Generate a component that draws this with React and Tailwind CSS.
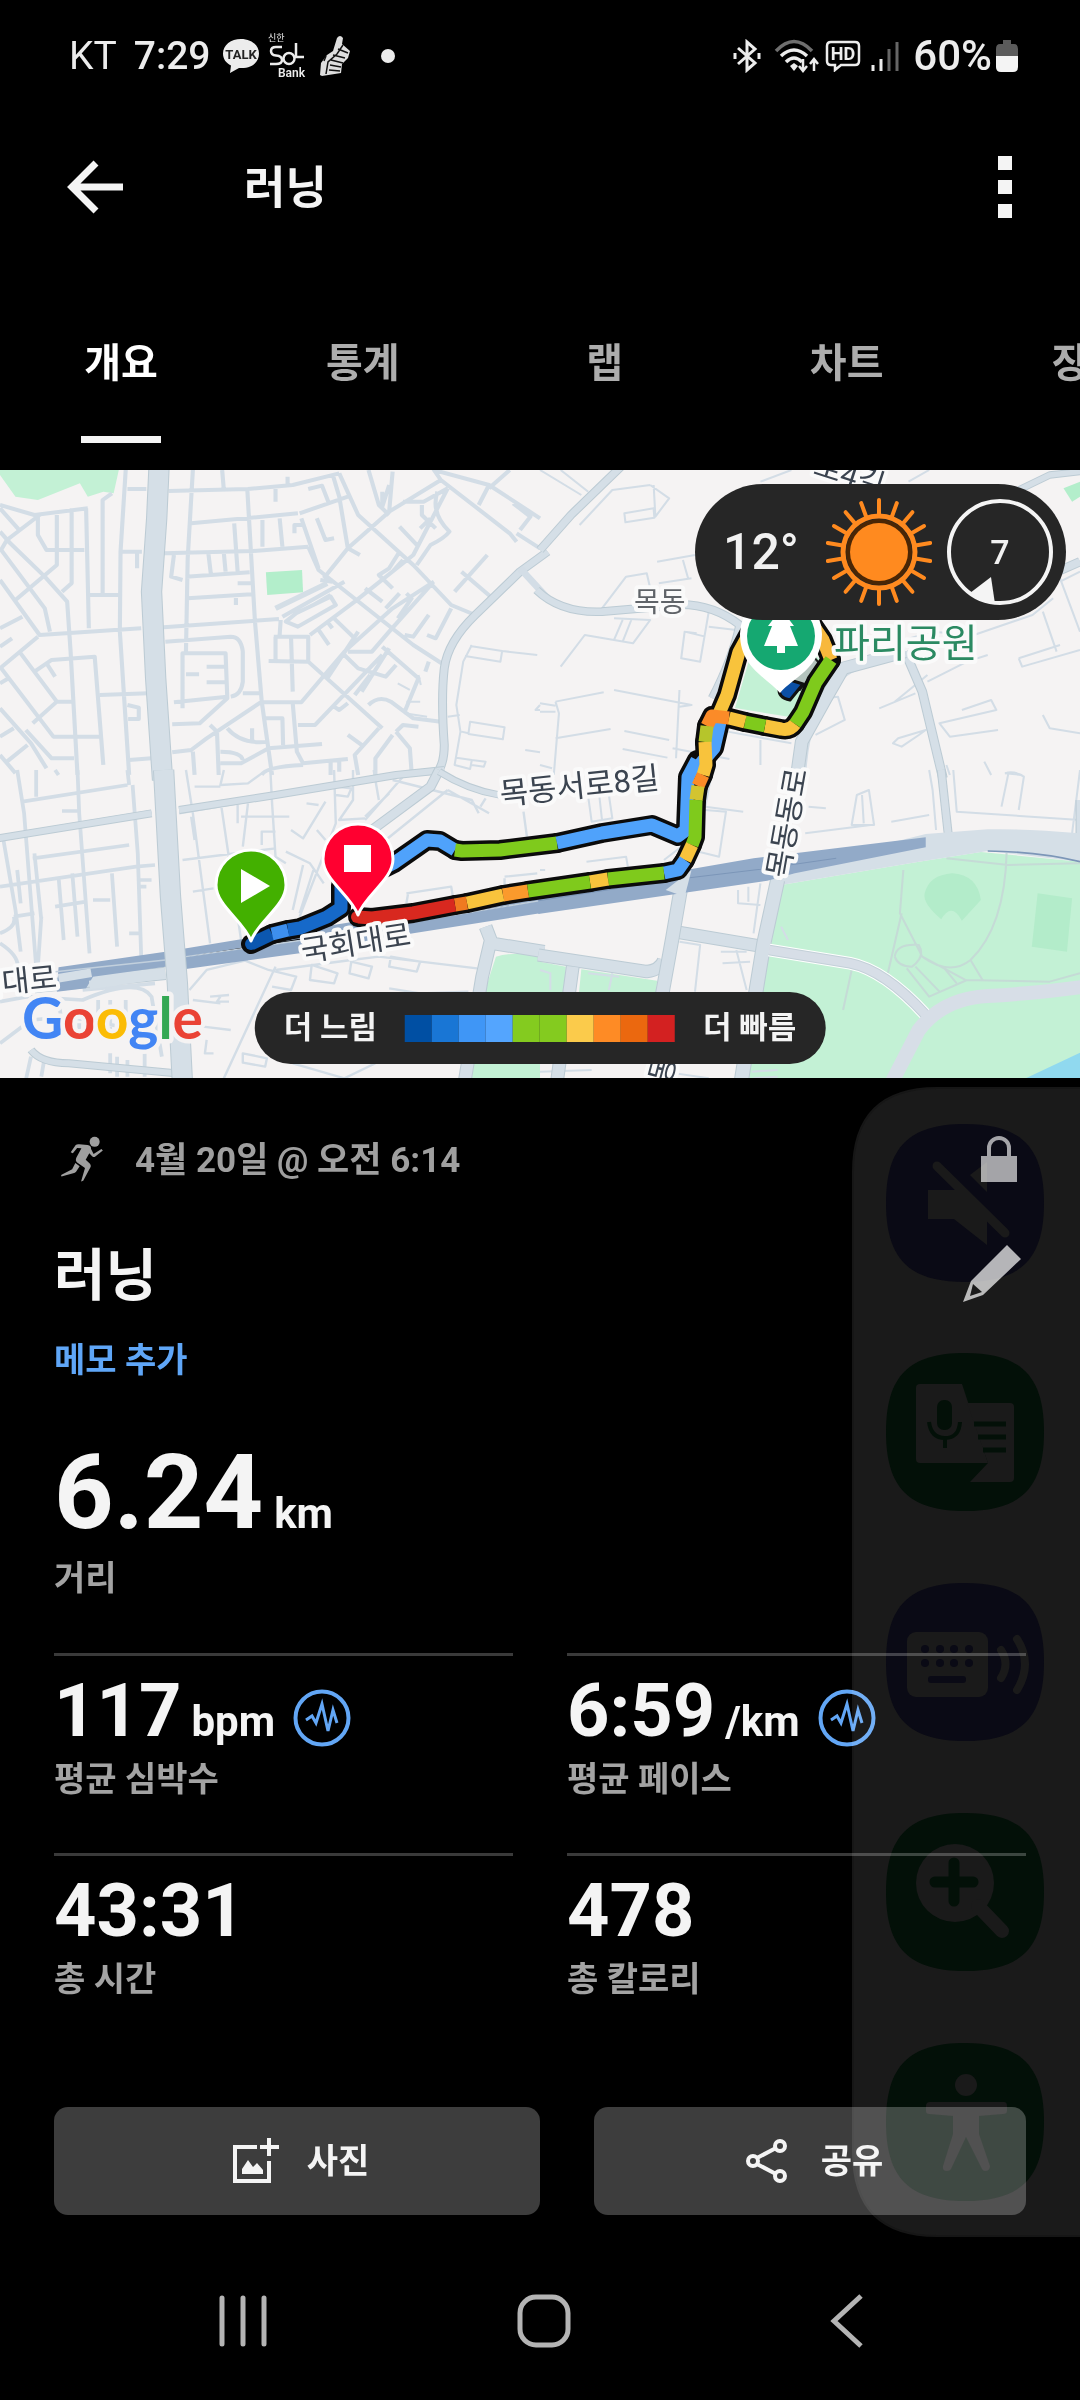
import React from "react";

const MINOR_NW =
  "M0 120L100 150 255 130M0 200L30 235M0 130L60 200M115 150L20 225 0 260M20 225L130 335 195 410 205 560 225 930M0 250L130 430 145 500M110 155V210L135 255H245M165 150V300L45 405M208 130V355L180 380M250 130L258 490M0 345L115 510 410 490M0 490L65 455M0 610L110 515M0 545L35 520M325 85L298 105V385M365 15L350 260 348 500 375 930M255 390H345M370 72H425M350 260H412M398 265V310M60 565L165 710H210M0 605L155 815H290M165 710L95 775M100 620L150 585 275 575 300 900M0 655L25 640M0 730L90 835 135 910M0 815L40 790M290 690L430 685M20 890L80 840M75 795L150 880H215M375 885L440 880M370 720L403 728V762H372M135 595L160 635M0 870L45 925";
const MINOR_N =
  "M490 78L720 72 850 60 985 25M560 15L545 280 540 560M645 15L650 75M718 72L728 250 740 465 760 710 790 930M555 175L865 145M870 145L1010 95M800 72V110M835 35V62M680 175L690 320M762 165V245M812 160L820 245M475 265L735 258 895 245M505 270L497 335 530 345M605 265L612 325M650 265L655 320M540 335L725 322M545 400L730 388M690 355H730M685 395V420M475 487L810 462M820 455L1000 350M830 470L860 445 960 395 975 420 865 485ZM910 420L960 390M480 530L670 515Q700 515 705 560V650Q700 690 670 695M530 730V565H655L660 700 580 775 500 778M600 605H655M540 628H578M600 652H655M505 712L660 695M760 710L600 820 555 855 500 862M705 685H755M760 712H875L1000 560 1140 430 1260 350M560 860L565 930M630 800L635 930M610 780L630 800M660 790Q700 840 780 830M770 760H820L822 840M780 850L935 837M640 860Q700 860 705 885M640 895H700L780 850M850 715L862 860 880 895 1010 882M760 930Q770 905 880 900M732 790V825M960 885V930M985 890V920M795 515H895V590L780 588M800 515V585M845 515L850 680M815 465L812 510M895 590L1110 790M865 780H915L1110 570M900 510L1030 410 1200 270 1300 70M930 345L965 350M895 245L925 315 1200 540 1290 600M875 160L925 310M965 25L985 95 1010 250 1045 270M920 160L945 225 970 220M895 72L935 62 955 115M855 205V180H880M985 25L1040 150 1200 300 1310 420 1380 450M940 340L1010 250 1130 140 1140 20M1070 15L1100 120 1130 150M1130 140L1280 45 1260 15 1420 60 1568 160M1420 60L1390 120M1280 45L1480 205 1500 230M1480 15L1420 70M1110 80V125L1130 60M1170 110H1230L1300 70M1270 80Q1250 145 1305 200 1290 220 1250 240L1210 300M1225 120V150L1265 190M1160 185L1215 245M1220 190L1250 160M1160 260L1130 310 1100 330 1140 370M1060 370L1110 410M1170 285L1140 320M1180 385L1195 400 1155 460M1120 430L1160 385M1255 355L1130 500 1080 560H1010M1245 450L1200 515 1175 510M1310 430L1265 520 1240 510M1340 320L1430 400M1415 270L1320 380M970 460L1030 520M925 495L955 540M950 470L965 490M1050 680L1130 550M1000 570L1040 610 1120 635 1150 600M950 640L1040 500M1110 545L1215 640 1175 740M1070 720Q1100 690 1135 710L1200 760 1280 770M1030 690L1075 630M1150 800L1170 780 1215 785M1100 790L1030 870 1040 930M1010 810L1050 840M1140 810L1090 880V930M1150 800L1190 850 1195 920M970 725L985 735 1010 715M1500 205L1568 250M1510 195L1540 155 1490 115M1245 590L1235 620";
const THIN_N =
  "M1370 540L1345 590 1325 720 1337 800 1320 900 1365 912 1370 885 1325 878M1365 543L1458 558 1453 590 1350 573M1458 558L1560 570M1365 770L1465 787 1460 823 1360 807ZM1340 800L1360 805M1370 885L1410 890 1405 905 1370 900M1300 755L1335 750M1568 720L1555 735H1568M1525 855L1568 862M1155 655L1190 675M1180 710H1220M1215 630L1222 660M1175 745L1240 755";
const MINOR_NE =
  "M320 60L210 75 115 180M320 60L375 100 335 155 330 60M245 145L330 130 332 158 248 172ZM0 15L120 90M60 15L140 80M340 290L450 270M345 355L440 340M415 285L430 340M180 430L250 335 310 325 320 370M215 460L320 465 270 535 130 510 60 605M240 465L215 525M265 465L240 530M420 500L455 505M490 440L465 590 410 580 420 500 480 515M490 485L570 495M45 710L185 682M215 675L440 720 405 725M405 675L395 880M45 710L55 745 40 930M45 820L205 792M245 798L375 825M240 852L370 878M0 715L45 722M0 740H45M0 900L35 910M385 850L550 882M545 800L730 835M640 825V900M770 930Q780 740 860 660 900 600 1060 580M830 700L865 695 885 765 800 810M1040 530L1140 500 1260 510 1430 450 1490 400M1390 580L1510 540M1390 580L1400 605 1568 555M1125 650L1240 590 1300 570M985 730L1090 685M1030 710L1125 630M1225 735L1310 705 1325 735 1160 775 1190 815 1330 795M1460 750L1480 790 1568 805M1025 835L1040 820 1120 795 1100 810 1050 845ZM1510 340L1568 500M1460 440L1500 560M1180 900L1190 930M1290 890L1310 930M1350 925L1400 930M1070 50L1130 15M1510 350L1568 320M640 50L730 15";
const MINOR_W =
  "M50 0L70 130 105 590M105 0V80M160 0L170 15M225 0L230 130 260 550M370 0L375 45M65 95L370 45M0 200L440 125M385 45L400 250 410 560M95 265L375 225M0 350L395 290 450 285M10 210L45 420 60 545M50 300L60 400M100 250L120 450M170 320L185 510M210 310L225 500M325 310L340 530M40 440L100 430M160 410L250 395M110 590L120 440M0 490Q50 470 40 440M0 520Q60 560 50 600M270 390H320M180 123H225M400 330H440M405 350H425M375 490H405M0 695L80 680 240 690Q400 620 440 680L470 860M0 820L90 750 200 740 450 790M90 860L75 930M130 860L120 920M230 760V800M285 690V790M320 690V790M365 690V790M340 860V920M320 850V910M370 870V920M420 850V920M170 690L185 800M240 660L450 640";
const MINOR_C =
  "M520 130L1150 20 1270 10M540 0L560 130 610 520M565 50H640M650 0L640 45 720 40 760 10M785 0L790 100 800 260 830 280M640 90L700 510M720 100L705 230M530 270L800 235M760 225V185H800M700 140H840M690 100V160M555 140L565 210M970 0L975 160 870 440M1025 0V90L985 150 1060 145M1085 0L1100 90M945 95L880 205 845 180M890 100L925 105M975 50L1020 55 1010 80 975 75M1060 140L1130 70M1170 20L1060 150M830 245L900 280 940 340M880 285L850 420M910 300L870 430M560 365L620 355M700 370L830 345M920 180L945 210M1300 60L1420 130M1300 60L1120 210M1140 30L1370 90 1390 130M1410 85L1395 110M1180 370L1310 350 1315 380M1185 370L1180 400M1465 320L1560 310M1465 325V350M1520 125L1530 200M610 530L780 600 860 620 845 660 790 650M800 590L650 925M800 600L1020 570 1100 560 1385 595M905 585L980 610 970 640 900 630ZM1020 575L1080 590 1070 625 1015 610ZM1135 560L1220 575 1210 605 1130 590ZM705 850L775 865 770 890 705 878ZM850 880L1000 925 1090 880M610 680L665 675M640 680L630 695 665 695M590 770L670 780M600 810L595 850H620M1130 655L1220 670 1360 665M550 660L600 600 720 570M560 690L640 700";
const MINOR_SE =
  "M140 80L200 75 210 145 150 155ZM172 75L180 150M905 165L920 75 955 60 970 165ZM935 75L940 160M1130 0L1140 60 1150 180M1200 0L1210 125 1568 150M1350 10Q1375 0 1405 20L1390 120M1360 10L1340 110M1020 155L1130 135M770 190L960 165M780 110L830 115M500 0L480 110 590 125M480 120L540 125 520 260 440 240M135 275L250 260 255 290M0 300H15M360 270L410 230M575 360L575 400 640 405M605 350V395M640 340L620 490M405 515L465 525 450 665M525 545H600M530 580L610 575M570 540L600 660M720 510L700 470M140 610L230 620M210 610L200 660M0 600L30 610V660M0 905L150 900M360 905L490 925M615 905L690 900M620 925L690 920M1568 0L1545 190";
const GREEN_PATHS =
  "M1055 300L1045 430 1110 560Q1190 620 1250 570 1350 470 1355 245M1050 430L1010 610M1250 570L1285 630M1110 560L1235 630 1480 635 1568 610M1065 595L1130 680 1240 630M1090 590L1160 665M1170 590L1210 640M905 600L880 720M1180 265L1360 285 1568 280M1030 560Q1035 520 1100 525 1120 560 1080 590 1040 590 1030 560";

const SEGMENTS = [
  ["M251 944L272 934", "#0b57b0"],
  ["M272 934L288 930", "#3d8fee"],
  ["M288 930L300 928 327 917 341 908 341 885", "#1669c9"],
  ["M360 880L394 863 427 840 440 841 455 850", "#4fa2fb"],
  ["M455 850L462 851 500 850 557 843", "#7fca1c"],
  ["M557 843L602 833 652 825 678 836 686 830 687 803 688 777 697 760", "#4fa2fb"],
  ["M697 768L714 748 720 722", "#4fa2fb"],
  ["M718 716L727 695 739 652 751 630", "#f8c33c"],
  ["M808 618L823 640 831 660", "#f8b83c"],
  ["M831 660L816 682 803 712 795 724", "#7fca1c"],
  ["M795 724Q790 731 781 729L765 726", "#f8c33c"],
  ["M765 726L745 722", "#7fca1c"],
  ["M745 722L729 718", "#f8c33c"],
  ["M729 718L712 716 707 726", "#fb8b28"],
  ["M707 726L705 742", "#b6c52b"],
  ["M705 742L706 765 703 775", "#f8c33c"],
  ["M703 775L698 786", "#fb8b28"],
  ["M698 786L696 800", "#d3c430"],
  ["M696 800L695 837 692 845", "#7fca1c"],
  ["M692 845L685 860", "#f8c33c"],
  ["M685 860L678 870 664 873", "#4fa2fb"],
  ["M664 873L608 879", "#7fca1c"],
  ["M608 879L590 882", "#f8c33c"],
  ["M590 882L528 891", "#7fca1c"],
  ["M528 891L503 895", "#fb9a2c"],
  ["M503 895L467 903", "#f8c33c"],
  ["M467 903L455 905", "#f07a20"],
  ["M455 905L413 913 372 918 358 917", "#d8281f"],
];

function Minor({ d, w = 12, color = "#d3dde6" }) {
  return <path d={d} fill="none" stroke={color} strokeWidth={w} />;
}

function Major({ d, w }) {
  return (
    <>
      <path d={d} fill="none" stroke="#bccbd4" strokeWidth={w + 6} />
      <path d={d} fill="none" stroke="#d5dfe7" strokeWidth={w} />
    </>
  );
}

function MapLabel({ x, y, rotate = 0, size = 30, color = "#3b4450", children }) {
  return (
    <text
      x={x}
      y={y}
      fontSize={size}
      fill={color}
      stroke="#fafafa"
      strokeWidth="8"
      strokeLinejoin="round"
      paintOrder="stroke"
      transform={`rotate(${rotate} ${x} ${y})`}
    >
      {children}
    </text>
  );
}

function Pin({ x, y, color, children }) {
  return (
    <g transform={`translate(${x} ${y})`}>
      <path
        d="M0 55C-7 35-35 20-35 -1A35 35 0 0 1 35 -1C35 20 7 35 0 55Z"
        fill={color}
        stroke="#fff"
        strokeWidth="3"
      />
      {children}
    </g>
  );
}

function RouteMap() {
  return (
    <svg
      viewBox="0 470 1080 608"
      preserveAspectRatio="xMidYMid slice"
      className="block h-[608px] w-full"
      role="img"
      aria-label="러닝 경로 지도"
      strokeLinejoin="round"
    >
      <rect x="0" y="470" width="1080" height="608" fill="#f5f3f3" />

      <g transform="translate(0 465) scale(.3444 .3333)">
        <path d="M0 15H345L330 85 300 80 255 95 232 55 110 105 45 95 0 30Z" fill="#c3f1d5" />
        <path d="M772 322L877 315 880 382 776 390Z" fill="#b3eecb" />
        <Minor d={MINOR_NW} />
        <Minor d={MINOR_N} />
        <Minor d={THIN_N} w={6} />
        <path d="M800 430L950 355" stroke="#d4dee6" strokeWidth="16" />
        <Major d="M1590 260L1510 320 1380 450Q1300 530 1290 610 1280 700 1290 840 1290 900 1265 930" w={20} />
        <Minor d="M1510 310L1590 400" w={20} />
        <Major d="M462 0L455 160 440 380 452 640 472 945" w={56} />
      </g>

      <g transform="translate(540 465) scale(.3444 .3333)">
        <Minor d={MINOR_NE} w={6} />
        <Major d="M240 0L90 150 0 255" w={20} />
        <Major d="M-10 375Q60 445 180 440L350 425Q480 400 580 480 560 580 500 700" w={20} />
        <Major d="M1060 560L1110 680 1170 940" w={22} />
        <Major d="M1060 560L880 610 830 700 760 830 745 940" w={34} />
        <path d="M1520 70L1568 50V95L1545 110Z" fill="#b3eecb" />
        <Major d="M1390 75L1480 30 1568 20" w={16} />
        <Major d="M1480 330L1568 290" w={22} />
      </g>

      <g transform="translate(0 770) scale(.3444 .3333)">
        <path d="M1440 560Q1480 545 1568 555V925H1370L1415 640Z" fill="#c3f1d5" />
        <Minor d={MINOR_W} w={11} />
        <Minor d={MINOR_C} w={7} />
        <Major d="M-5 205L440 130M520 120L800 75 1150 15 1290 0" w={18} />
        <Major d="M1275 0L1250 50 1080 180 960 300" w={24} />
        <Major d="M1275 5Q1360 60 1450 75" w={16} />
        <Major d="M100 650L480 610M1410 470L1425 510 1400 620 1350 930M1430 520L1580 545" w={34} />
        <Major d="M90 840Q120 880 200 880L510 910" w={18} />
        <path d="M170 592L480 545 700 508 1000 460 1568 365V430L1200 490 870 550 540 597 480 590 270 620 250 655 165 665Z" fill="#92aac8" />
        <path d="M100 612L480 570M540 560L880 510 1568 392" stroke="#c2d0dd" strokeWidth="4" />
        <path d="M260 645L480 612M170 625L265 608" stroke="#d5dfe7" strokeWidth="26" />
        <Major d="M475 0L495 380 515 640 530 945" w={56} />
      </g>

      <g transform="translate(540 770) scale(.3444 .3333)">
        <path d="M700 345L1100 275 1280 246 1568 275V930H585L670 530Z" fill="#c3f1d5" />
        <path d="M0 575L75 590 70 700H0ZM120 598L340 632 335 700H110Z" fill="#c3f1d5" />
        <path d="M1165 448Q1110 400 1117 370 1130 315 1197 310 1270 315 1280 390L1225 452Q1195 395 1165 448Z" fill="#b3ecca" />
        <path d="M1445 370L1545 385 1530 545 1428 530Z" fill="#b3ecca" />
        <Minor d={MINOR_SE} w={6} />
        <Minor d={GREEN_PATHS} w={6} color="#c5dbd6" />
        <path d="M1400 930L1568 848V930Z" fill="#90d9ef" />
        <Major d="M1165 0L1185 190" w={20} />
        <Major d="M1568 90V200" w={20} />
        <path d="M700 345L1100 275 1300 243 1568 275V190Q1400 175 1300 178L1120 192 700 300Z" fill="#d5dfe7" />
        <Major d="M-5 555L310 605Q350 600 360 570M390 485L650 530M95 590L50 930" w={34} />
        <Major d="M415 320L385 500 350 700 340 930" w={36} />
        <Major d="M690 330L650 520 585 930" w={38} />
        <path d="M665 540L900 580Q1000 600 1120 735" fill="none" stroke="#fff" strokeWidth="38" />
        <path d="M665 540L900 580Q1000 600 1120 735M1020 940L1100 780Q1170 685 1300 678T1568 650" fill="none" stroke="#c3d0d8" strokeWidth="32" />
        <path d="M665 540L900 580Q1000 600 1120 735" fill="none" stroke="#d7dee7" strokeWidth="26" />
        <path d="M1020 940L1100 780Q1170 685 1300 678T1580 650" fill="none" stroke="#d7dee7" strokeWidth="42" />
        <path d="M-5 365L440 297 620 265 1120 202V232L740 310 660 332 -5 432Z" fill="#92aac8" />
        <path d="M-5 392L380 330 640 298 860 265" fill="none" stroke="#7c96b8" strokeWidth="3" />
        <path d="M365 360L440 300 420 380Z" fill="#d5dfe7" />
        <path d="M1300 243Q1450 245 1568 275" fill="none" stroke="#7c96b8" strokeWidth="5" />
      </g>

      <path d="M735 708L752 650 800 640 824 664 790 717Z" fill="#c3f1d5" />
      <path d="M790 678L812 655 820 664 800 690Z" fill="#b4c3bd" stroke="#222" strokeWidth="2" />
      <path d="M779 688Q778 698 790 700L803 684 790 680Z" fill="#0b4fa5" stroke="#111" strokeWidth="3" />

      <g fill="none" strokeLinecap="round">
        {SEGMENTS.map(([d]) => (
          <path key={d} d={d} stroke="#0b0b0b" strokeWidth="20" />
        ))}
      </g>
      <g fill="none" strokeLinecap="butt">
        {SEGMENTS.map(([d, color]) => (
          <path key={d} d={d} stroke={color} strokeWidth="13" />
        ))}
      </g>
      <circle cx="251" cy="944" r="6" fill="#0b57b0" />
      <circle cx="357" cy="917" r="6" fill="#d8281f" />

      <MapLabel x={812} y={474} rotate={18}>로4길</MapLabel>
      <MapLabel x={634} y={612} size={28} color="#5f6368">목동</MapLabel>
      <MapLabel x={834} y={657} size={39} color="#2b8a62">파리공원</MapLabel>
      <MapLabel x={501} y={805} rotate={-6} size={31}>목동서로8길</MapLabel>
      <MapLabel x={303} y={962} rotate={-9}>국회대로</MapLabel>
      <MapLabel x={-52} y={999} rotate={-6}>국회대로</MapLabel>
      <MapLabel x={788} y={879} rotate={-80}>목동동로</MapLabel>
      <MapLabel x={662} y={1112} rotate={-75}>목동</MapLabel>

      <Pin x={251} y={886} color="#43b000">
        <path d="M-10-17V17L19 0Z" fill="#fff" />
      </Pin>
      <Pin x={358} y={860} color="#ff0030">
        <path d="M-14-15H13V12H-14Z" fill="#fff" />
      </Pin>

      <path d="M780 693C768 678 740 668 740 634A41 41 0 0 1 822 634C822 668 792 678 780 693Z" fill="#fff" />
      <circle cx="781" cy="636" r="34" fill="#15a871" />
      <path d="M781 609L768 626H772L764 646H777V653H785V646H798L790 626H794Z" fill="#fff" />

      <text
        x="22"
        y="1039"
        fontSize="57"
        fontWeight="700"
        fontFamily="Lato, sans-serif"
        stroke="#f5f3f3"
        strokeWidth="9"
        strokeLinejoin="round"
        paintOrder="stroke"
      >
        <tspan fill="#4285f4">G</tspan>
        <tspan fill="#ea4335">o</tspan>
        <tspan fill="#fbbc05">o</tspan>
        <tspan fill="#4285f4">g</tspan>
        <tspan fill="#34a853">l</tspan>
        <tspan fill="#ea4335">e</tspan>
      </text>
    </svg>
  );
}

function SunIcon() {
  return (
    <svg viewBox="-53 -55 106 110" className="h-[110px] w-[106px]" aria-hidden="true">
      {Array.from({ length: 18 }, (_, i) => (
        <path key={i} d="M0-37V-52" stroke="#ff8a1f" strokeWidth="4" strokeLinecap="round" transform={`rotate(${i * 20})`} />
      ))}
      <circle r="36" fill="none" stroke="#ff8a1f" strokeWidth="5" />
      <circle r="33" fill="#4a2605" />
      <circle r="29" fill="#ff8a1f" />
    </svg>
  );
}

function WeatherPill() {
  return (
    <div className="absolute right-[14px] top-[14px] flex h-[136px] items-center rounded-full bg-[#262626] pl-[28px] pr-[12px] text-[#f1f1f1]">
      <span className="w-[90px] text-[50px] leading-[60px] font-medium">12°</span>
      <span className="ml-[13px]"><SunIcon /></span>
      <span className="relative ml-[14px] flex h-[108px] w-[108px] items-center justify-center">
        <svg viewBox="-54 -54 108 108" className="absolute inset-0 h-full w-full" aria-hidden="true">
          <circle r="51" fill="none" stroke="#f4f4f4" strokeWidth="4" />
          <path d="M-9 25L-5 52Q-18 50-30 41Z" fill="#f4f4f4" />
        </svg>
        <span className="text-[34px] leading-[40px] font-medium">7</span>
      </span>
    </div>
  );
}

function PaceLegend() {
  return (
    <div className="absolute bottom-[14px] left-1/2 flex h-[72px] -translate-x-1/2 items-center gap-[28px] rounded-full bg-[#262626] px-[29px] text-[31px] leading-[48px] font-bold whitespace-nowrap text-[#f3f3f3]">
      <span>더 느림</span>
      <span className="flex h-[27px] w-[270px] *:flex-1">
        <i className="bg-[#004fa3]" />
        <i className="bg-[#1976d5]" />
        <i className="bg-[#3f96f6]" />
        <i className="bg-[#54a5fe]" />
        <i className="bg-[#84cb1f]" />
        <i className="bg-[#84cb1f]" />
        <i className="bg-[#fbcb4b]" />
        <i className="bg-[#fe8b25]" />
        <i className="bg-[#eb680f]" />
        <i className="bg-[#d32121]" />
      </span>
      <span>더 빠름</span>
    </div>
  );
}

function StatusBar() {
  return (
    <div className="flex h-[112px] items-center justify-between pl-[69px] pr-[62px] leading-[48px] text-[#ececec]">
      <div className="flex items-center text-[39px]">
        <span>KT</span>
        <span className="ml-[17px] font-medium">7:29</span>
        <svg viewBox="0 0 38 38" className="ml-[11px] h-[38px] w-[38px]" aria-label="TALK">
          <path d="M19 2C9 2 1 8 1 16.500C1 22 4 26 9 28.500L8 36 17 31C30 32 37 25 37 16.500 37 8 29 2 19 2Z" fill="#ececec" />
          <text x="19" y="21.500" textAnchor="middle" fontSize="13" fontWeight="700" fill="#222">TALK</text>
        </svg>
        <svg viewBox="0 0 42 46" className="ml-[8px] h-[46px] w-[42px]" aria-label="신한 SOL Bank" fill="#ececec">
          <text x="0" y="8" fontSize="9">신한</text>
          <path d="M14 14H8Q3 14 3 18 3 22 8 22.500 14 23 14 27 14 31 8 31H2" fill="none" stroke="#ececec" strokeWidth="2.500" />
          <circle cx="21" cy="25.500" r="5.500" fill="none" stroke="#ececec" strokeWidth="2.500" />
          <path d="M28 10V24H36" fill="none" stroke="#ececec" strokeWidth="2.500" />
          <text x="10" y="44" fontSize="12" fontWeight="600">Bank</text>
        </svg>
        <svg viewBox="0 0 32 42" className="ml-[9px] h-[42px] w-[32px]" aria-hidden="true">
          <path d="M1 40L2 28 8 20 14 16 18 3Q21-1 24 3L23 9 31 16 29 23 23 29 22 38 3 41Z" fill="#dedede" />
          <path d="M7 39L9 27 18 19 24 10M14 20L26 23M12 25L24 28M11 30L22 32M10 35L21 36M19 14L29 18M5 26L7 21" fill="none" stroke="#111" strokeWidth="1.500" />
        </svg>
        <span className="ml-[30px] h-[14px] w-[14px] rounded-full bg-[#ececec]" />
      </div>
      <div className="flex items-center text-[42px]">
        <svg viewBox="0 0 28 34" className="h-[34px] w-[28px]" fill="none" stroke="#ececec" strokeWidth="3" aria-hidden="true">
          <path d="M5 9L22 24 14 31V3L22 10 5 25" />
          <path d="M2 14V20M26 14V20" />
        </svg>
        <svg viewBox="0 0 46 36" className="ml-[13px] h-[36px] w-[46px]" fill="none" strokeWidth="3.500" aria-hidden="true">
          <path d="M2 13Q20-6 38 13" stroke="#6f6f6f" />
          <path d="M7 18Q20 6 33 18M12 24Q20 16 28 24" stroke="#ececec" />
          <path d="M20 25L16 28 20 33 24 28Z" fill="#ececec" />
          <path d="M29 21V32M25 28L29 33 33 28M40 33V22M36 26L40 21 44 26" stroke="#ececec" strokeWidth="2.500" />
        </svg>
        <svg viewBox="0 0 36 32" className="ml-[5px] h-[32px] w-[36px]" aria-label="HD">
          <path d="M6 2H30Q34 2 34 6V21Q34 25 30 25H16L10 30V25H6Q2 25 2 21V6Q2 2 6 2Z" fill="none" stroke="#ececec" strokeWidth="2.500" />
          <text x="18" y="20" textAnchor="middle" fontSize="18" fontWeight="700" fill="#ececec">HD</text>
        </svg>
        <svg viewBox="0 0 28 32" className="ml-[10px] h-[32px] w-[28px]" fill="none" strokeWidth="3" aria-hidden="true">
          <path d="M2 25V31M10 19V31" stroke="#ececec" />
          <path d="M18 9V31M26 2V31" stroke="#666" />
        </svg>
        <span className="ml-[14px] font-medium">60%</span>
        <svg viewBox="0 0 22 32" className="ml-[4px] h-[32px] w-[22px]" aria-hidden="true">
          <path d="M7 0H15V4H18Q22 4 22 9V16H0V9Q0 4 4 4H7Z" fill="#5b5b5b" />
          <path d="M0 16H22V27Q22 32 17 32H5Q0 32 0 27Z" fill="#f4f4f4" />
        </svg>
      </div>
    </div>
  );
}

const TABS = ["개요", "통계", "랩", "차트", "장비"];

function Tabs() {
  return (
    <nav className="flex overflow-hidden pt-[30px] pb-[27px]">
      {TABS.map((tab, i) => (
        <button
          key={tab}
          type="button"
          className={
            i === 0
              ? "flex w-[22.4%] shrink-0 flex-col items-center text-[40px] font-bold text-white"
              : "flex w-[22.4%] shrink-0 flex-col items-center text-[40px] font-bold text-[#adadad]"
          }
        >
          <span className="h-[144px] leading-[144px]">{tab}</span>
          <span className={i === 0 ? "h-[7px] w-[80px] bg-[#f4f4f4]" : "h-[7px] w-[80px]"} />
        </button>
      ))}
    </nav>
  );
}

function PulseIcon() {
  return (
    <svg viewBox="0 0 58 58" className="h-[58px] w-[58px]" fill="none" stroke="#62a6f5" aria-hidden="true">
      <circle cx="29" cy="29" r="26.500" strokeWidth="4" />
      <path d="M13 31L19 27 23 34 29 15 35 42 40 21 44 34" strokeWidth="3" />
    </svg>
  );
}

function Metric({ value, unit, label, pulse }) {
  return (
    <div className="border-t-[3px] border-[#3a3a3a] pt-[12px] pb-[50px]">
      <dd className="flex h-[86px] items-center">
        <span className="text-[74px] leading-[86px] font-bold whitespace-nowrap">
          {value}
          {unit && <span className="ml-[10px] text-[42px] leading-none font-bold">{unit}</span>}
        </span>
        {pulse && (
          <button type="button" aria-label={`${label} 정보`} className="mt-[14px] ml-[18px]">
            <PulseIcon />
          </button>
        )}
      </dd>
      <dt className="mt-[1px] text-[34px] leading-[48px] font-bold text-[#a3a3a3]">{label}</dt>
    </div>
  );
}

const SQUIRCLE = "M79 0C135 0 158 23 158 79S135 158 79 158 0 135 0 79 23 0 79 0Z";

function EdgePanel() {
  return (
    <svg
      viewBox="0 0 228 1150"
      className="pointer-events-none absolute right-0 top-[1087px] h-[1150px] w-[228px] mix-blend-screen"
      aria-hidden="true"
    >
      <path d="M228 1H85Q1 1 1 85V1065Q1 1149 85 1149H228" fill="#1a1a1a" stroke="#161616" strokeWidth="2" />
      <g transform="translate(34 37)">
        <path d={SQUIRCLE} fill="#0a0a15" />
        <path d="M42 66H70L101 94V121L68 95H42ZM84 51L101 38V68Z" fill="#1a1a1a" />
        <path d="M51 42L119 109" stroke="#1a1a1a" strokeWidth="9" strokeLinecap="round" />
      </g>
      <g transform="translate(34 266)">
        <path d={SQUIRCLE} fill="#031008" />
        <path d="M34 31H76L102 110H34Q30 110 30 106V35Q30 31 34 31Z" fill="#1a1a1a" />
        <path d="M81 50H124Q128 50 128 54V125Q128 129 124 129H84L102 110Z" fill="#1a1a1a" />
        <path d="M88 71H120M92 84H120M97 97H120" stroke="#031008" strokeWidth="5" />
        <rect x="51" y="47" width="15" height="30" rx="7" fill="#031008" />
        <path d="M43 69Q45 85 59 85T74 69M59 85V95" fill="none" stroke="#031008" strokeWidth="4" />
      </g>
      <g transform="translate(34 496)">
        <path d={SQUIRCLE} fill="#0a0a15" />
        <rect x="21" y="49" width="81" height="65" rx="9" fill="#1a1a1a" />
        {[39, 54, 68, 83].map((x) => (
          <g key={x} fill="#0a0a15">
            <circle cx={x} cy="66" r="4" />
            <circle cx={x} cy="80" r="4" />
          </g>
        ))}
        <rect x="42" y="93" width="38" height="7" rx="3" fill="#0a0a15" />
        <path d="M115 67Q124 81 115 95M131 56Q147 81 131 107" fill="none" stroke="#1a1a1a" strokeWidth="8" strokeLinecap="round" />
      </g>
      <g transform="translate(34 726)">
        <path d={SQUIRCLE} fill="#031008" />
        <circle cx="69" cy="70" r="39" fill="#1a1a1a" />
        <path d="M92 93L116 118" stroke="#1a1a1a" strokeWidth="14" strokeLinecap="round" />
        <path d="M49 69H87M68 50V88" stroke="#031008" strokeWidth="11" strokeLinecap="round" />
      </g>
      <g transform="translate(34 956)">
        <path d={SQUIRCLE} fill="#031008" />
        <circle cx="80" cy="42" r="11" fill="#1a1a1a" />
        <path d="M44 59H118Q121 59 121 63V68Q121 71 117 71L93 73V91L104 123Q104 128 99 128 97 128 96 126L80 94 65 126Q64 128 61 128 56 128 57 123L67 91V73L43 71Q40 71 40 68V63Q40 59 44 59Z" fill="#1a1a1a" />
      </g>
    </svg>
  );
}

function RunnerIcon() {
  return (
    <svg viewBox="168 154 126 134" className="h-[48px] w-[45px]" fill="#9f9f9f" aria-hidden="true">
      <circle cx="265" cy="173" r="14" />
      <path d="M198 202L212 182Q216 179 222 180L245 182Q256 184 255 193L262 207 284 193 288 197 266 215Q262 217 258 213L250 205 240 223 252 234Q255 238 254 243L233 282 227 284 238 246 216 231Q210 225 214 217L228 191 216 190 204 205Z" />
      <path d="M211 232L223 241 213 257Q210 260 205 261L172 270 171 266 202 250Z" />
    </svg>
  );
}

export default function App() {
  return (
    <main className="relative min-h-screen overflow-x-hidden bg-black font-[Roboto,'Noto_Sans_CJK_KR',sans-serif] text-[#f4f4f4]" lang="ko">
      <StatusBar />

      <header className="flex h-[150px] items-center pl-[67px] pr-[68px]">
        <button type="button" aria-label="뒤로">
          <svg viewBox="0 0 56 54" className="h-[54px] w-[56px]" fill="none" stroke="#f4f4f4" strokeWidth="7" aria-hidden="true">
            <path d="M29 3L5 27 29 51M5 27H56" />
          </svg>
        </button>
        <h1 className="ml-[121px] flex-1 pt-[3px] text-[45px] leading-[60px] font-bold">러닝</h1>
        <button type="button" aria-label="메뉴" className="flex flex-col gap-[10px]">
          <i className="h-[14px] w-[14px] bg-[#f4f4f4]" />
          <i className="h-[14px] w-[14px] bg-[#f4f4f4]" />
          <i className="h-[14px] w-[14px] bg-[#f4f4f4]" />
        </button>
      </header>

      <Tabs />

      <section className="relative">
        <RouteMap />
        <WeatherPill />
        <PaceLegend />
      </section>

      <section className="px-[54px] pt-[54px]">
        <div className="flex h-[54px] items-center">
          <span className="ml-[6px]"><RunnerIcon /></span>
          <p className="ml-[30px] flex-1 pt-[3px] text-[35px] leading-[48px] font-bold text-[#9f9f9f]">4월 20일 @ 오전 6:14</p>
          <svg viewBox="0 0 36 46" className="mr-[9px] h-[46px] w-[36px]" aria-label="비공개">
            <path d="M8 22V12A10 10 0 0 1 28 12V22" fill="none" stroke="#a0a0a0" strokeWidth="4" />
            <path d="M0 20H36V46H0Z" fill="#a0a0a0" />
          </svg>
        </div>
        <div className="mt-[52px] flex h-[72px] items-center justify-between">
          <h2 className="pt-[3px] text-[56px] leading-[72px] font-bold">러닝</h2>
          <button type="button" aria-label="이름 편집" className="mr-[5px]">
            <svg viewBox="0 0 58 58" className="h-[58px] w-[58px]" fill="#b2b2b2" aria-hidden="true">
              <path fillRule="evenodd" d="M44 0L58 14 20 50 0 57 8 36ZM10 39L7 51 19 47Z" />
            </svg>
          </button>
        </div>
        <button type="button" className="mt-[26px] block text-[34px] leading-[48px] font-bold text-[#5fa6f7]">메모 추가</button>

        <p className="mt-[54px] text-[104px] leading-[110px] font-bold">
          6.24<span className="ml-[11px] text-[42px] leading-none font-bold">km</span>
        </p>
        <p className="mt-[6px] text-[34px] leading-[48px] font-bold text-[#a3a3a3]">거리</p>

        <dl className="mt-[51px] grid grid-cols-2 gap-x-[54px]">
          <Metric value="117" unit="bpm" label="평균 심박수" pulse />
          <Metric value="6:59" unit="/km" label="평균 페이스" pulse />
          <Metric value="43:31" label="총 시간" />
          <Metric value="478" label="총 칼로리" />
        </dl>

        <div className="mt-[54px] grid grid-cols-[9fr_8fr] gap-[54px] text-[34px] leading-[48px] font-bold">
          <button type="button" className="flex h-[108px] items-center justify-center gap-[28px] rounded-[14px] bg-[#3d3d3d] pl-[8px]">
            <svg viewBox="0 0 46 46" className="h-[46px] w-[46px]" fill="none" stroke="#f4f4f4" strokeWidth="4" aria-hidden="true">
              <path d="M24 9H2V43H36V23M36 0V18M27 9H46" />
              <path d="M9 36L9 31 15 22 20 29 24 25 30 32V36Z" fill="#f4f4f4" stroke="none" />
            </svg>
            사진
          </button>
          <button type="button" className="flex h-[108px] items-center justify-center gap-[32px] rounded-[14px] bg-[#3d3d3d] pl-[8px]">
            <svg viewBox="0 0 44 46" className="h-[46px] w-[44px]" fill="none" stroke="#f4f4f4" strokeWidth="4" aria-hidden="true">
              <circle cx="8" cy="23" r="5" />
              <circle cx="35" cy="8" r="5" />
              <circle cx="35" cy="38" r="5" />
              <path d="M12 20L31 10M12 26L31 36" />
            </svg>
            공유
          </button>
        </div>
      </section>

      <nav className="mt-[27px] flex h-[158px] items-center justify-around pl-[92px] pr-[83px]" aria-label="시스템">
        <button type="button" aria-label="최근 앱">
          <svg viewBox="0 0 54 54" className="h-[54px] w-[54px]" stroke="#b4b4b4" strokeWidth="5" strokeLinecap="round" aria-hidden="true">
            <path d="M6 4V50M27 4V50M48 4V50" />
          </svg>
        </button>
        <button type="button" aria-label="홈">
          <svg viewBox="0 0 54 54" className="h-[54px] w-[54px]" fill="none" stroke="#b4b4b4" strokeWidth="5" aria-hidden="true">
            <rect x="3" y="3" width="48" height="48" rx="16" />
          </svg>
        </button>
        <button type="button" aria-label="뒤로 가기">
          <svg viewBox="0 0 54 54" className="h-[54px] w-[54px]" fill="none" stroke="#b4b4b4" strokeWidth="5" aria-hidden="true">
            <path d="M42 2L15 27 42 52" />
          </svg>
        </button>
      </nav>

      <EdgePanel />
    </main>
  );
}
